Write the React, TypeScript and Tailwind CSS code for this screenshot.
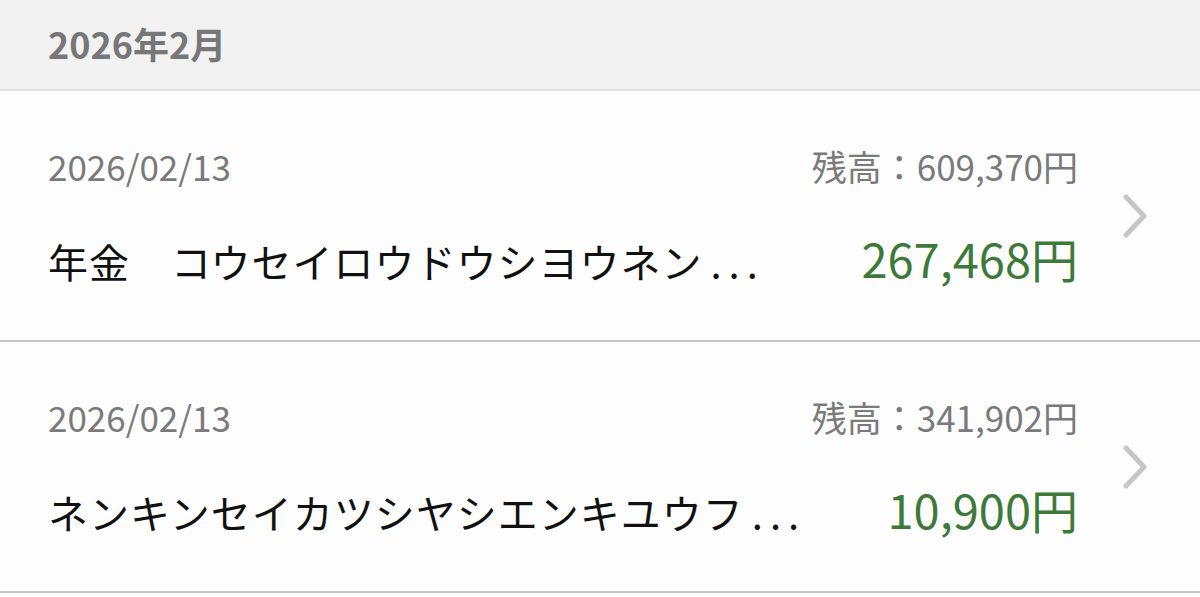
import React from "react";

const font = { fontFamily: '"Noto Sans CJK JP", "Noto Sans", sans-serif' };

type Item = { date: string; balance: string; title: string; amount: string };

const items: Item[] = [
  { date: "2026/02/13", balance: "残高：609,370円", title: "年金　コウセイロウドウシヨウネン", amount: "267,468円" },
  { date: "2026/02/13", balance: "残高：341,902円", title: "ネンキンセイカツシヤシエンキユウフ", amount: "10,900円" },
];

function Chevron() {
  return (
    <svg width="26" height="44" viewBox="0 0 26 44" fill="none">
      <path d="M4 3 L22 22 L4 41" stroke="#c6c6c6" strokeWidth="5" strokeLinecap="round" strokeLinejoin="round" />
    </svg>
  );
}

function Row({ item }: { item: Item }) {
  return (
    <div className="flex h-[251px] items-center border-b-2 border-[#c4c4c4] bg-[#fdfdfd] pl-[48px]">
      <div className="flex flex-1 flex-col pt-[2px]">
        <div className="flex items-baseline justify-between text-[35px] leading-[44px] text-[#7a7a7a]">
          <span>{item.date}</span>
          <span>{item.balance}</span>
        </div>
        <div className="mt-[42px] flex items-baseline justify-between">
          <span className="text-[40px] leading-[56px] tracking-[1px] text-[#111111]">
            {item.title}
            <span className="ml-[8px] tracking-[7px]">...</span>
          </span>
          <span className="text-[47px] leading-[56px] text-[#3d7a3a]">{item.amount}</span>
        </div>
      </div>
      <div className="ml-[44px] mr-[52px] flex w-[26px] items-center">
        <Chevron />
      </div>
    </div>
  );
}

export default function App() {
  return (
    <div className="h-[597px] w-[1200px] overflow-hidden bg-[#fdfdfd]" style={font}>
      <div className="flex h-[91px] items-center border-b-2 border-[#e2e2e2] bg-[#f3f2f3] pb-[4px] pl-[48px]">
        <span className="text-[36px] font-bold text-[#777777]">2026年2月</span>
      </div>
      {items.map((it, i) => (
        <Row key={i} item={it} />
      ))}
    </div>
  );
}
